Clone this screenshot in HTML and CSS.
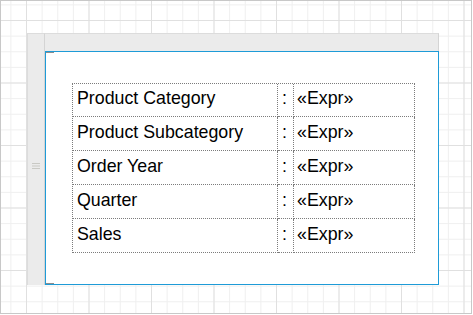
FILE: index.html
```html
<!DOCTYPE html>
<html lang="en">
<head>
    <meta charset="UTF-8">
    <meta name="viewport" content="width=device-width, initial-scale=1.0">
    <title>Report Designer</title>
    <link rel="stylesheet" href="styles.css">
</head>
<body>
    <div class="frame">
        <div class="designer">
            <div class="corner"></div>
            <div class="ruler-top"></div>
            <div class="ruler-left">
                <svg class="handle" width="8" height="8" viewBox="0 0 8 8">
                    <path d="M0 1.5H8M0 4H8M0 6.5H8" stroke="#c9c9c4" stroke-width="1.2"/>
                </svg>
            </div>
            <div class="canvas">
                <span class="tick tick-top"></span>
                <span class="tick tick-bottom"></span>
                <div class="report">
                    <div class="cell label">Product Category</div>
                    <div class="cell colon">:</div>
                    <div class="cell value">«Expr»</div>

                    <div class="cell label">Product Subcategory</div>
                    <div class="cell colon">:</div>
                    <div class="cell value">«Expr»</div>

                    <div class="cell label">Order Year</div>
                    <div class="cell colon">:</div>
                    <div class="cell value">«Expr»</div>

                    <div class="cell label">Quarter</div>
                    <div class="cell colon">:</div>
                    <div class="cell value">«Expr»</div>

                    <div class="cell label">Sales</div>
                    <div class="cell colon">:</div>
                    <div class="cell value">«Expr»</div>
                </div>
            </div>
        </div>
    </div>
</body>
</html>
```

FILE: styles.css
```css
body {
    margin: 0;
    font-family: 'Liberation Sans', Arial, sans-serif;
    background: #ffffff;
}

.frame {
    width: 472px;
    height: 314px;
    box-sizing: border-box;
    border: 1px solid #c8c8c8;
    padding: 32px 0 0 26px;
    background-color: #ffffff;
    background-image:
        linear-gradient(to right, #e0e0e0 1px, transparent 1px),
        linear-gradient(to bottom, #e0e0e0 1px, transparent 1px),
        linear-gradient(to right, #efefef 1px, transparent 1px),
        linear-gradient(to bottom, #efefef 1px, transparent 1px);
    background-size:
        62.5px 62.5px,
        62.5px 62.5px,
        15.625px 15.625px,
        15.625px 15.625px;
    background-position:
        25px 0,
        0 19px,
        9.375px 0,
        0 3.375px;
}

.designer {
    display: grid;
    grid-template-columns: 18px 394px;
    grid-template-rows: 18px 234px;
}

.corner,
.ruler-top,
.ruler-left {
    background: #ebebeb;
    box-sizing: border-box;
}

.corner {
    border-top: 1px solid #dcdcdc;
    border-left: 1px solid #dcdcdc;
    border-right: 1px solid #d4d4d4;
}

.ruler-top {
    border-top: 1px solid #dcdcdc;
    border-right: 1px solid #d4d4d4;
}

.ruler-left {
    border-left: 1px solid #dcdcdc;
    border-right: 1px solid #d4d4d4;
    display: flex;
    align-items: center;
    justify-content: center;
    padding-bottom: 4px;
}

.handle {
    display: block;
}

.canvas {
    position: relative;
    box-sizing: border-box;
    border: 1px solid #1e9bd7;
    background: #ffffff;
    padding: 31px 0 0 26px;
}

.tick {
    position: absolute;
    left: 0;
    width: 8px;
    height: 1px;
    background: #8c8c8c;
}

.tick-top {
    top: 0;
}

.tick-bottom {
    bottom: 0;
}

.report {
    display: grid;
    grid-template-columns: 205px 16px 121px;
    grid-template-rows: 33px 34px 34px 34px 34px;
    width: max-content;
    border-left: 1px dotted #7c7c7c;
    border-top: 1px dotted #7c7c7c;
}

.cell {
    box-sizing: border-box;
    border-right: 1px dotted #7c7c7c;
    border-bottom: 1px dotted #7c7c7c;
    display: flex;
    align-items: center;
    padding-bottom: 3px;
    font-size: 17.8px;
    color: #000000;
    white-space: nowrap;
}

.label {
    padding-left: 4px;
}

.colon {
    padding-left: 4px;
}

.value {
    padding-left: 3px;
}
```
